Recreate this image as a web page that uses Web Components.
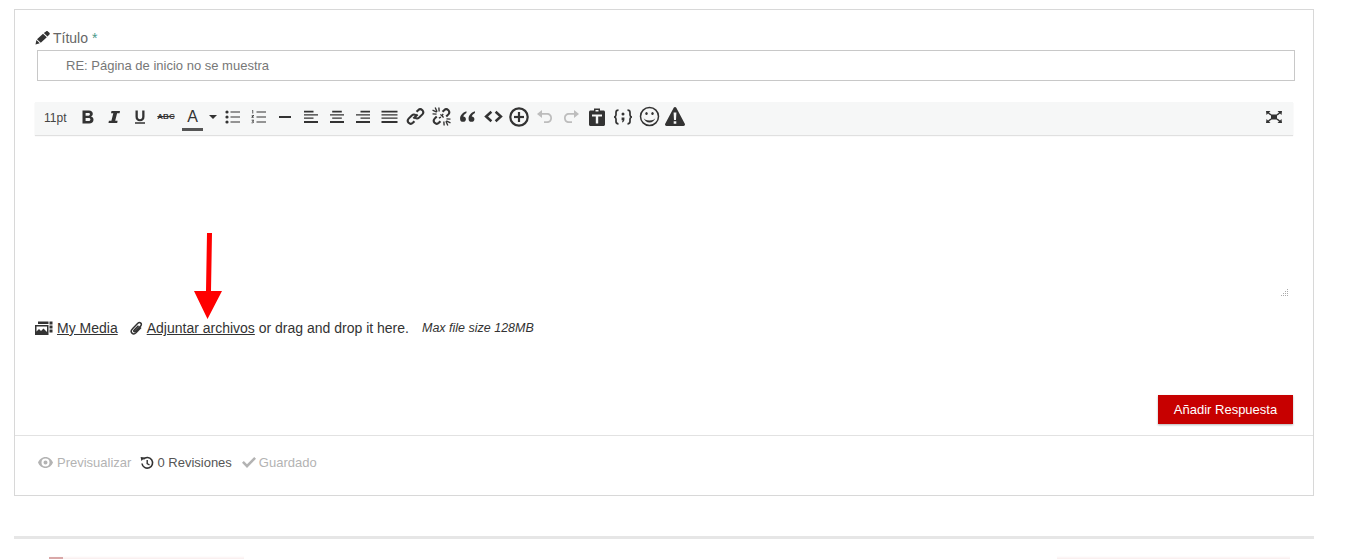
<!DOCTYPE html>
<html><head><meta charset="utf-8">
<style>
html,body{margin:0;padding:0;background:#fff;height:559px;overflow:hidden;font-family:"Liberation Sans",Arial,sans-serif;color:#333}
</style></head><body>
<reply-page></reply-page>
<script>
const I=(w,h,vb,body,fill='#333')=>`<svg width="${w}" height="${h}" viewBox="${vb}" fill="${fill}" aria-hidden="true">${body}</svg>`;
const icons={
pencil:I(15,14,'0 0 15 14','<path d="M.5 13.500l.9-4.400 3.400 3.200zM2 8.300l6-5.600 3.800 3.500-6 5.600zM8.800 2L11 .4c.6-.5 1.400-.5 1.900 0l1.500 1.400c.5.600.5 1.300 0 1.800L12.500 5.500z"/>'),
bold:I(14,14,'0 0 14 14','<path fill-rule="evenodd" d="M1.500 .5h6.500c2.400 0 3.800 1.300 3.800 3.200 0 1.300-.7 2.300-1.800 2.800 1.500.4 2.500 1.500 2.500 3.200 0 2.300-1.700 3.800-4.300 3.800H1.500zM4.600 3v2.700h2.900c.9 0 1.400-.5 1.400-1.350S8.400 3 7.500 3zM4.600 8v3h3.200c1 0 1.600-.6 1.600-1.500S8.800 8 7.800 8z"/>'),
italic:I(14,14,'0 0 14 14','<path d="M4.500 1h8.500l-.4 2.200h-2.500L8.200 10.800h2.400l-.4 2.200H1.500l.4-2.200h2.500L6.300 3.200H4z"/>'),
underline:I(14,14,'0 0 14 14','<path d="M2.500 .5h2.300v6.300c0 1.600.8 2.400 2.200 2.400s2.200-.8 2.200-2.400V.5h2.300v6.300c0 2.900-1.700 4.500-4.500 4.500S2.500 9.700 2.500 6.800zM2 12.200h10v1.600H2z"/>'),
list:I(16,14,'0 0 16 14','<circle cx="2" cy="2" r="1.600"/><circle cx="2" cy="7" r="1.600"/><circle cx="2" cy="12" r="1.600"/><path d="M5.500 1.500h9.500v1H5.500zM5.500 6.500h9.500v1H5.500zM5.500 11.500h9.500v1H5.500z"/>'),
olist:I(16,14,'0 0 16 14','<path d="M5.500 1.500h9.500v1H5.500zM5.500 6.500h9.500v1H5.500zM5.500 11.500h9.500v1H5.500z"/><path d="M1.200 .2h1v3.400h-.8V1h-.4zM.6 5h2.300v.8L1.700 7.200h1.300v.6H.5v-.7l1.400-1.500H.6zM.6 9.800h2.300v.7l-.9.700c.6 0 1 .3 1 .9 0 .7-.5 1.100-1.300 1.100H.5v-.6h1.300c.3 0 .5-.2.5-.4s-.2-.4-.6-.4h-.5v-.6l.8-.8H.6z"/>'),
hr:I(14,14,'0 0 14 14','<rect x="1" y="6" width="12" height="2"/>'),
left:I(16,14,'0 0 16 14','<path d="M1 .8h9.500v1.800H1zM1 4.300h14V5.600H1zM1 7.400h9.500v1.300H1zM1 11h14v2H1z"/>'),
center:I(16,14,'0 0 16 14','<path d="M3.200 .8h9.600v1.800H3.200zM1 4.300h14V5.600H1zM3.200 7.400h9.600v1.300H3.200zM1 11h14v2H1z"/>'),
right:I(16,14,'0 0 16 14','<path d="M5.500 .8H15v1.800H5.500zM1 4.300h14V5.600H1zM5.500 7.400H15v1.300H5.500zM1 11h14v2H1z"/>'),
justify:I(17,14,'0 0 17 14','<path d="M.5 .8h16v1.800H.5zM.5 4.300h16V5.600H.5zM.5 7.400h16v1.300H.5zM.5 11h16v2H.5z"/>'),
link:I(19,19,'0 0 18 18','<g fill="none" stroke="#333" stroke-width="2"><path d="M7 11l4-4"/><path d="M10 4.500l1.500-1.500a3 3 0 0 1 4 0 3 3 0 0 1 0 4L12.500 10a3 3 0 0 1-4 0"/><path d="M8 13.500L6.500 15a3 3 0 0 1-4 0 3 3 0 0 1 0-4L5.500 8a3 3 0 0 1 4 0"/></g>'),
unlink:I(19,19,'0 0 18 18','<g fill="none" stroke="#333" stroke-width="2"><path d="M10 4.500l1.500-1.500a3 3 0 0 1 4 0 3 3 0 0 1 0 4L13.500 9"/><path d="M8 13.500L6.500 15a3 3 0 0 1-4 0 3 3 0 0 1 0-4L4.500 9"/></g><g stroke="#333" stroke-width="1.300"><path d="M3 .5l1.800 4M.5 3l4 1.800M6.500 .5l.3 3.800M.5 6.500l3.800.3M15 17.500l-1.800-4M17.500 15l-4-1.800M11.500 17.500l-.3-3.800M17.500 11.500l-3.800-.3M8 7l3 3M10.500 6.500l-1 2M6.500 10.500l2-1"/></g>'),
quote:I(17,15,'0 0 16 14','<path d="M7 2C4 3 1 5.500 1 9c0 2 1.200 3 2.800 3s2.700-1 2.700-2.500-1.100-2.400-2.500-2.400C4.300 5.800 5.600 4.500 7 3.800zM15 2c-3 1-6 3.500-6 7 0 2 1.200 3 2.800 3s2.700-1 2.700-2.500-1.100-2.400-2.500-2.400c.3-1.300 1.600-2.600 3-3.300z"/>'),
code:I(19,15,'0 0 18 14','<path d="M7 2.500L2 7l5 4.500" fill="none" stroke="#333" stroke-width="2.400"/><path d="M11 2.500L16 7l-5 4.500" fill="none" stroke="#333" stroke-width="2.400"/>'),
plus:I(20,20,'0 0 20 20','<circle cx="10" cy="10" r="8.700" fill="none" stroke="#333" stroke-width="2.200"/><path d="M5 8.900h10v2.200H5z"/><path d="M8.900 5h2.200v10H8.900z"/>'),
undo:I(18,16,'0 0 18 16','<path d="M1 5l5-4v3h5c3 0 5 2 5 5s-2 5-5 5H8v-1.700h3c2 0 3.300-1.300 3.300-3.300S13 5.700 11 5.700H6V9z"/>','#bdbdbd'),
redo:I(18,16,'0 0 18 16','<path d="M17 5l-5-4v3H7C4 4 2 6 2 9s2 5 5 5h3v-1.700H7c-2 0-3.300-1.300-3.300-3.300S5 5.700 7 5.700h5V9z"/>','#bdbdbd'),
paste:I(16,18,'0 0 16 18','<path fill-rule="evenodd" d="M5 .5h6V2.500h3.500c.8 0 1.500.7 1.500 1.500v12.500c0 .8-.7 1.500-1.500 1.500h-13C.7 18 0 17.300 0 16.500V4c0-.8.7-1.500 1.500-1.500H5zM6.500 2v1.500h3V2zM3 6.500v2h3.800v7h2.400v-7H13v-2z"/>'),
braces:I(20,16,'0 0 20 16','<path d="M5.500 1.200C3.800 1.200 3 2 3 3.500V6c0 1-.5 1.700-1.800 2C2.500 8.300 3 9 3 10v2.500c0 1.500.8 2.300 2.500 2.300M14.500 1.200c1.700 0 2.500.8 2.500 2.300V6c0 1 .5 1.700 1.800 2-1.300.3-1.800 1-1.800 2v2.500c0 1.500-.8 2.300-2.500 2.300" fill="none" stroke="#333" stroke-width="1.700"/><circle cx="10" cy="5" r="1.500"/><path d="M8.600 8.500h2.800v2c0 1.400-.8 2.500-2 3l-.4-.8c.5-.4.700-.9.700-1.400H8.600z"/>'),
smile:I(21,21,'0 0 21 21','<circle cx="10.500" cy="10.500" r="9" fill="none" stroke="#333" stroke-width="1.500"/><ellipse cx="7.500" cy="7.500" rx="1.200" ry="1.600"/><ellipse cx="13.500" cy="7.500" rx="1.200" ry="1.600"/><path d="M4.500 11.500c1 3.300 3.300 5 6 5s5-1.700 6-5c-.5 2-2.800 3-6 3s-5.500-1-6-3z"/>'),
warn:I(20,19,'0 0 20 19','<path fill-rule="evenodd" d="M10 0c.6 0 1 .3 1.300.8l8.500 16c.5 1-.1 2.200-1.300 2.200H1.500C.3 19-.3 17.800.2 16.800L8.700.8C9 .3 9.400 0 10 0zM8.600 5.500l.4 7.500h2l.4-7.500zM8.700 14.300v2.500h2.600v-2.500z"/>'),
full:I(18,14,'0 0 18 14','<rect x="6" y="4.500" width="6" height="5"/><path d="M1 1h4.500L4 2.500 6.500 4.500 5.500 5.500 3 3.500 1.500 5zM17 1h-4.500L14 2.500 11.500 4.500 12.500 5.500 15 3.500 16.500 5zM1 13h4.500L4 11.500 6.500 9.500 5.500 8.500 3 10.500 1.500 9zM17 13h-4.500L14 11.500 11.500 9.500 12.500 8.500 15 10.500 16.500 9z"/>'),
media:I(18,14,'0 0 18 14','<path fill-rule="evenodd" d="M3 3V.5h10.500V3zM0 4h13.500v10H0zM1.500 5.500v5L4 8l2 2 2.500-2.500 3.500 3.500V5.500zM14.500 .5h3v3h-3zM14.500 4.500h3v3h-3zM14.500 8.500h3v3h-3z"/>'),
clip:I(13,14,'0 0 13 14','<path d="M11 6.500L6 11.800c-1.300 1.300-3 1.300-4 .3s-1-2.700.3-4L7.800 2.300c1-1 2.200-1 3-.2s.8 2-.2 3L5.400 10.300c-.5.500-1.100.5-1.400.2s-.3-.9.2-1.400L8.500 4.700" fill="none" stroke="#333" stroke-width="1.500"/>'),
eye:I(15,11,'0 0 15 11','<path fill-rule="evenodd" d="M7.500 0C11 0 13.800 2.500 15 5.500 13.800 8.500 11 11 7.500 11S1.200 8.500 0 5.500C1.200 2.500 4 0 7.500 0zM7.500 1.500a4 4 0 1 0 0 8 4 4 0 0 0 0-8zM7.500 3.500a2 2 0 1 1 0 4 2 2 0 0 1 0-4z"/>','#b3b3b3'),
history:I(14,14,'0 0 14 14','<path d="M3.300 3.300A5.300 5.300 0 1 1 2 7.500" fill="none" stroke="#333" stroke-width="1.600"/><path d="M.6 1l4.200.6L1.400 5z"/><path d="M6.500 4h1.400v3.200l2 1.300-.7 1L6.500 8z"/>'),
check:I(14,11,'0 0 14 11','<path d="M0 5.800l1.800-1.800 3.200 3.200L12.200 0 14 1.800 5 11z"/>','#b3b3b3')
};

class UiIcon extends HTMLElement{constructor(){super();this.attachShadow({mode:'open'}).innerHTML=`<style>:host{display:inline-flex;align-items:center;justify-content:center}svg{display:block}</style>${icons[this.getAttribute('name')]||''}`}}
customElements.define('ui-icon',UiIcon);

class EditorToolbar extends HTMLElement{constructor(){super();
const item=n=>`<span class="b"><ui-icon name="${n}"></ui-icon></span>`;
this.attachShadow({mode:'open'}).innerHTML=`<style>
:host{display:flex;align-items:center;height:33px;background:#f6f7f7;box-shadow:0 1px 1px rgba(0,0,0,.12);padding:0 10px 4px 9px;box-sizing:border-box}
.b{display:flex;align-items:center;justify-content:center;width:26px;height:26px;flex:none}
.size{font-size:12px;color:#444;width:23px;margin-right:8px;padding-top:2px}
.abc{font-size:8px;font-weight:bold;color:#333;text-decoration:line-through;width:26px;text-align:center}
.fore{display:flex;align-items:center;width:41px;flex:none}
.color{width:21px;margin-left:3px;font-size:16px;line-height:18px;color:#333;border-bottom:3px solid #555;height:24px;box-sizing:border-box;text-align:center;margin-top:5px;padding-top:1px}
.caret{width:0;height:0;border:4px solid transparent;border-top-color:#333;border-bottom:0;margin-left:6px}
.sp{flex:1}
.b.full{width:18px;margin-right:0}
</style>
<span class="size">11pt</span>
${item('bold')}${item('italic')}${item('underline')}
<span class="abc">ABC</span>
<span class="fore"><span class="color">A</span><span class="caret"></span></span>
${['list','olist','hr','left','center','right','justify','link','unlink','quote','code','plus','undo','redo','paste','braces','smile','warn'].map(item).join('')}
<span class="sp"></span><span class="b full"><ui-icon name="full"></ui-icon></span>`}}
customElements.define('editor-toolbar',EditorToolbar);

class ReplyForm extends HTMLElement{constructor(){super();this.attachShadow({mode:'open'}).innerHTML=`<style>
:host{display:block;box-sizing:border-box;width:1300px;height:487px;border:1px solid #d8d8d8;margin-left:14px;background:#fff}
.top{padding:0 20px;height:425px;display:flex;flex-direction:column;box-sizing:border-box}
label{display:flex;align-items:center;gap:3px;font-size:14px;line-height:18px;color:#666;margin-top:19px}
label i{color:#4a9a8a;font-style:normal}
.title{margin:3px -2px 0 2px;height:31px;box-sizing:border-box;border:1px solid #c8c8c8;font-size:13px;color:#777;line-height:29px;padding-left:28px}
editor-toolbar{margin-top:21px}
.area{position:relative;height:184px}
.grip{position:absolute;right:5px;bottom:22px}
.att{display:flex;align-items:center;font-size:14px;line-height:18px;color:#333;height:18px}
.att a{color:#333;text-decoration:underline}
.att em{font-size:12.5px;margin-left:13px}
.act{display:flex;justify-content:flex-end;margin-top:auto;padding-bottom:11px}
button{all:unset;box-sizing:border-box;width:135px;height:29px;background:#c70000;color:#fff;font-size:13px;text-align:center;line-height:27px;box-shadow:0 1px 2px rgba(0,0,0,.3);font-family:inherit}
.foot{border-top:1px solid #e2e2e2;height:60px;display:flex;align-items:center;padding-left:23px;font-size:13px;color:#b3b3b3;padding-bottom:6px;box-sizing:border-box}
.foot span{display:inline-flex;align-items:center;gap:4px}
.foot .dark{color:#555;gap:3px;margin-left:9px}
.foot .saved{gap:3px;margin-left:10px}
</style>
<div class="top">
<label><ui-icon name="pencil"></ui-icon><span>Título <i>*</i></span></label>
<div class="title">RE: Página de inicio no se muestra</div>
<editor-toolbar></editor-toolbar>
<div class="area"><svg class="grip" width="8" height="8" viewBox="0 0 8 8" fill="#aaa"><path d="M7 0h1v1H7zM5 2h1v1H5zM7 2h1v1H7zM3 4h1v1H3zM5 4h1v1H5zM7 4h1v1H7zM1 6h1v1H1zM3 6h1v1H3zM5 6h1v1H5zM7 6h1v1H7z"/></svg></div>
<div class="att"><ui-icon name="media" style="margin-right:4px"></ui-icon><a>My Media</a><ui-icon name="clip" style="margin:0 4px 0 12px"></ui-icon><a>Adjuntar archivos</a><span>&nbsp;or drag and drop it here.</span><em>Max file size 128MB</em></div>
<div class="act"><button>Añadir Respuesta</button></div>
</div>
<div class="foot"><span><ui-icon name="eye"></ui-icon>Previsualizar</span><span class="dark"><ui-icon name="history"></ui-icon>0 Revisiones</span><span class="saved"><ui-icon name="check"></ui-icon>Guardado</span></div>`}}
customElements.define('reply-form',ReplyForm);

class ArrowMark extends HTMLElement{constructor(){super();this.attachShadow({mode:'open'}).innerHTML=`<style>:host{position:absolute;left:193px;top:233px;display:block;width:30px;height:87px}svg{display:block}</style><svg width="30" height="87" viewBox="0 0 30 87"><path fill="#f00" d="M14 0h5l-1 58h11L14.500 86 1 58h12z"/></svg>`}}
customElements.define('arrow-mark',ArrowMark);

class PageFoot extends HTMLElement{constructor(){super();this.attachShadow({mode:'open'}).innerHTML=`<style>:host{display:flex;width:1300px;margin:40px 0 0 14px;border-top:3px solid #e6e6e6;justify-content:space-between;padding:17px 24px 0 35px;box-sizing:border-box}
.strip{display:block;height:3px;background:linear-gradient(to bottom,#fff,#f9eded);position:relative}
.l{width:195px}.r{width:233px}
.l::before{content:"";position:absolute;left:0;top:1px;width:14px;height:2px;background:#d9a8a8}
</style><span class="strip l"></span><span class="strip r"></span>`}}
customElements.define('page-foot',PageFoot);

class ReplyPage extends HTMLElement{constructor(){super();this.attachShadow({mode:'open'}).innerHTML=`<style>:host{display:block;position:relative;padding-top:9px}</style><reply-form></reply-form><page-foot></page-foot><arrow-mark></arrow-mark>`}}
customElements.define('reply-page',ReplyPage);
</script></body></html>
